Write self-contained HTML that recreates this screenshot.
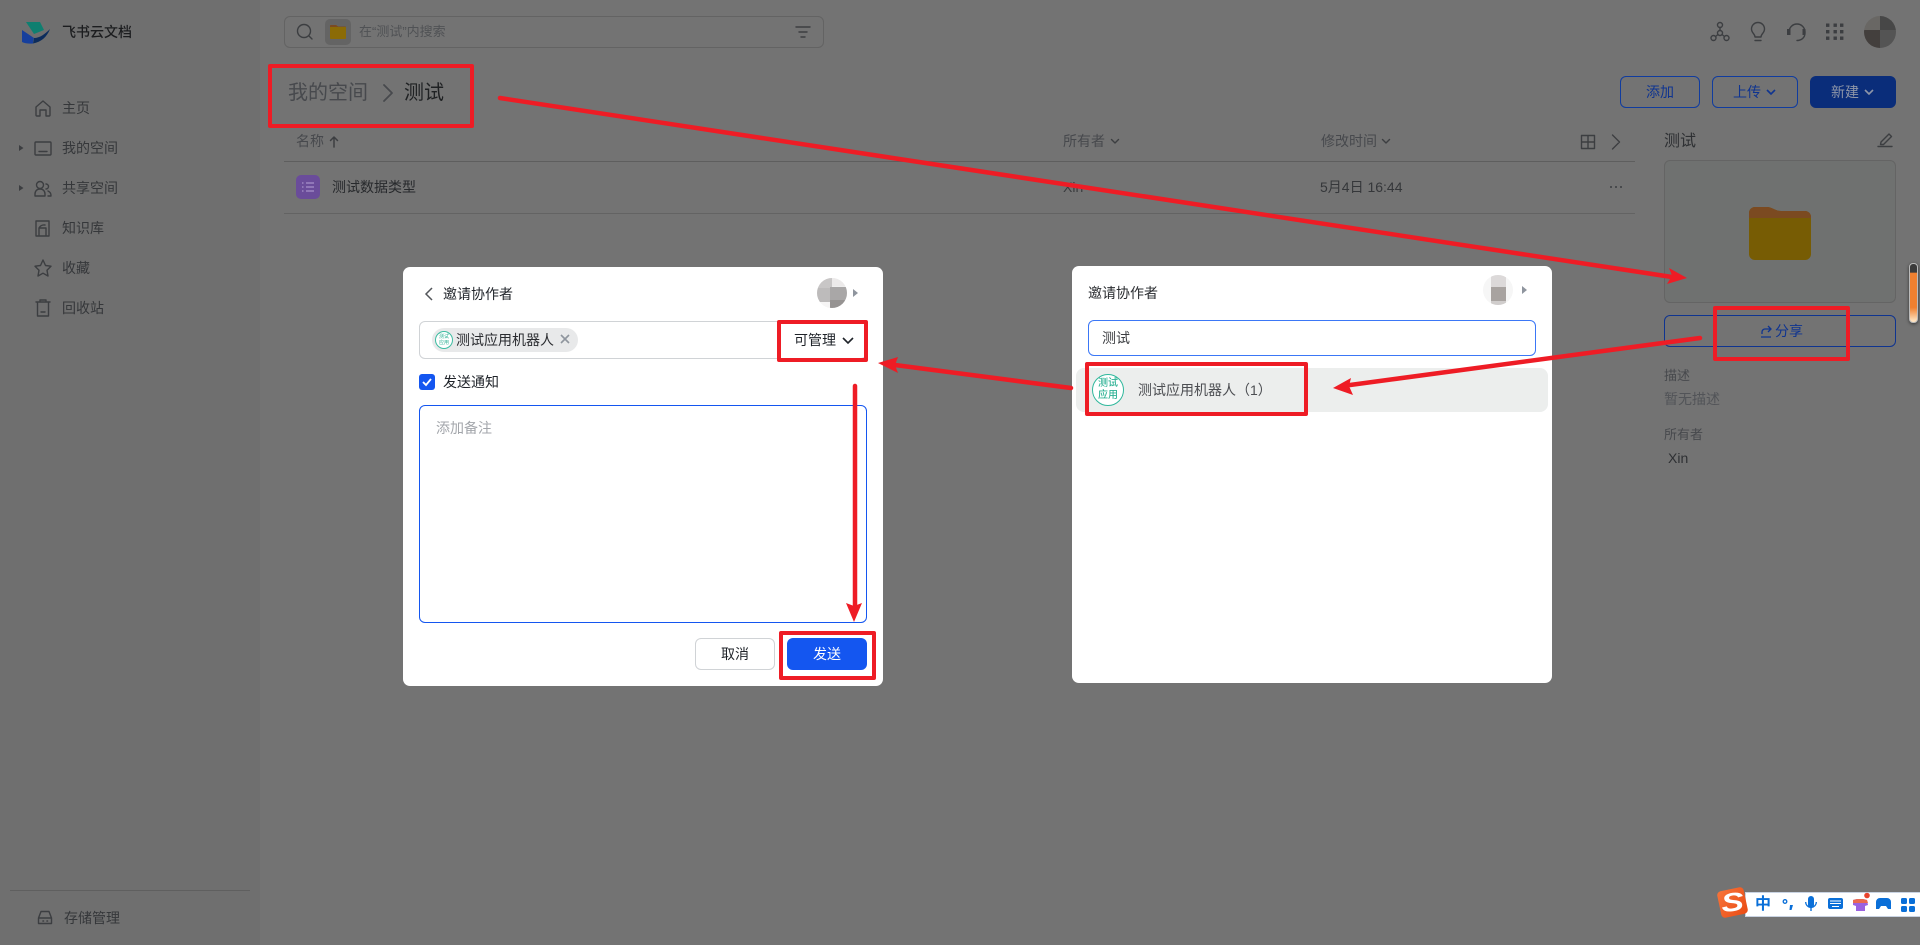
<!DOCTYPE html>
<html lang="zh-CN"><head><meta charset="utf-8"><title>飞书云文档</title>
<style>
html,body{margin:0;padding:0;width:1920px;height:945px;overflow:hidden;background:#737373}
body{position:relative;font-family:"Liberation Sans","Noto Sans CJK SC",sans-serif;font-size:14px;color:#1f2329}
div,span.a{position:absolute;box-sizing:border-box}
.t{position:absolute;white-space:nowrap;line-height:20px;height:20px}
.s{color:#35373a}
.g{color:#47494d}
.red{border:4px solid #ee1c25;border-radius:2px;z-index:5}
svg{position:absolute;left:0;top:0;overflow:visible}
</style></head><body>
<div style="left:0;top:0;width:260px;height:945px;background:#6f6f6f"></div>
<div style="left:10px;top:890px;width:240px;height:1px;background:#5f5f5f"></div>

<span class="t" style="left:62px;top:22px;color:#1c1d1f;font-weight:500;font-size:14px">飞书云文档</span>
<span class="t s" style="left:62px;top:98px">主页</span>
<span class="t s" style="left:62px;top:138px">我的空间</span>
<span class="t s" style="left:62px;top:178px">共享空间</span>
<span class="t s" style="left:62px;top:218px">知识库</span>
<span class="t s" style="left:62px;top:258px">收藏</span>
<span class="t s" style="left:62px;top:298px">回收站</span>
<span class="t s" style="left:64px;top:908px">存储管理</span>

<div style="left:284px;top:16px;width:540px;height:32px;border:1px solid #636363;border-radius:6px"></div>
<div style="left:325px;top:19px;width:26px;height:26px;background:#646464;border-radius:5px"></div>
<span class="t" style="left:359px;top:22px;font-size:13px;color:#505255">在“测试”内搜索</span>

<span class="t g" style="left:288px;top:81px;font-size:20px;line-height:24px;height:24px">我的空间</span>
<span class="t" style="left:404px;top:81px;font-size:20px;line-height:24px;height:24px;color:#1f2123">测试</span>

<span class="t g" style="left:296px;top:131px">名称</span>
<span class="t g" style="left:1063px;top:131px">所有者</span>
<span class="t g" style="left:1321px;top:131px">修改时间</span>
<div style="left:284px;top:161px;width:1351px;height:1px;background:#5e5e5e"></div>
<div style="left:284px;top:213px;width:1351px;height:1px;background:#636363"></div>
<div style="left:296px;top:175px;width:24px;height:24px;border-radius:5px;background:#6a4c9a"></div>
<span class="t" style="left:332px;top:177px;color:#27292c">测试数据类型</span>
<span class="t" style="left:1063px;top:177px;color:#3a3c3f">Xin</span>
<span class="t" style="left:1320px;top:177px;color:#35373a">5月4日 16:44</span>

<div style="left:1620px;top:76px;width:80px;height:32px;border:1px solid #103c9f;border-radius:6px;color:#0f3490;text-align:center;line-height:30px">添加</div>
<div style="left:1712px;top:76px;width:86px;height:32px;border:1px solid #103c9f;border-radius:6px;color:#0f3490;line-height:30px;padding-left:20px">上传</div>
<div style="left:1810px;top:76px;width:86px;height:32px;background:#0a2d7a;border-radius:6px;color:#8e96a8;line-height:32px;padding-left:21px">新建</div>

<span class="t" style="left:1664px;top:131px;font-size:16px;line-height:21px;color:#2e3033">测试</span>
<div style="left:1664px;top:160px;width:232px;height:143px;background:#6f7170;border:1px solid #646464;border-radius:6px"></div>
<div style="left:1664px;top:315px;width:232px;height:32px;border:1px solid #0f3490;border-radius:6px;color:#0f3490;line-height:30px;padding-left:110px;font-size:14px">分享</div>
<span class="t g" style="left:1664px;top:366px;font-size:13px">描述</span>
<span class="t" style="left:1664px;top:389px;color:#525458">暂无描述</span>
<span class="t g" style="left:1664px;top:425px;font-size:13px">所有者</span>
<span class="t" style="left:1668px;top:448px;color:#2e3033">Xin</span>

<div style="left:1909px;top:263px;width:9px;height:60px;border-radius:4px;border:1px solid #bbb;background:linear-gradient(#3a3a3a 0,#3a3a3a 14%,#f08030 16%,#f08030 75%,#ffe3c0 98%);box-shadow:0 1px 3px #333"></div>

<!-- left dialog -->
<div style="left:403px;top:267px;width:480px;height:419px;background:#fff;border-radius:7px"></div>
<span class="t" style="left:443px;top:284px;color:#1f2329;font-size:14px">邀请协作者</span>
<div style="left:817px;top:278px;width:30px;height:30px;border-radius:50%;overflow:hidden;background:#eee">
 <div style="left:0;top:0;width:15px;height:10px;background:#c8c6c6"></div>
 <div style="left:15px;top:0;width:15px;height:8px;background:#eceaea"></div>
 <div style="left:0;top:10px;width:13px;height:14px;background:#bdbbbb"></div>
 <div style="left:13px;top:9px;width:17px;height:13px;background:#a9a7a7"></div>
 <div style="left:13px;top:22px;width:17px;height:8px;background:#969392"></div>
 <div style="left:0;top:24px;width:13px;height:6px;background:#f6f5f5"></div>
</div>
<div style="left:419px;top:321px;width:448px;height:38px;border:1px solid #d0d3d6;border-radius:6px"></div>
<div style="left:432px;top:328px;width:146px;height:24px;background:#e8e9ea;border-radius:12px"></div>
<div style="left:435px;top:331px;width:18px;height:18px;border-radius:50%;background:#fff;border:1px solid #3dbda2;color:#2fb295;font-size:5px;line-height:6px;text-align:center;padding-top:2px">测试<br>应用</div>
<span class="t" style="left:456px;top:330px;color:#2a2c30">测试应用机器人</span>
<span class="t" style="left:794px;top:330px;color:#1f2329">可管理</span>
<div style="left:419px;top:374px;width:16px;height:16px;border-radius:3px;background:#1456f0"></div>
<span class="t" style="left:443px;top:372px;color:#1f2329">发送通知</span>
<div style="left:419px;top:405px;width:448px;height:218px;border:1px solid #1456f0;border-radius:6px"></div>
<span class="t" style="left:436px;top:418px;color:#a3a6ab">添加备注</span>
<div style="left:695px;top:638px;width:80px;height:32px;border:1px solid #d0d3d6;border-radius:6px;text-align:center;line-height:30px;color:#1f2329">取消</div>
<div style="left:787px;top:638px;width:80px;height:32px;background:#1456f0;border-radius:6px;text-align:center;line-height:32px;color:#fff">发送</div>

<!-- right dialog -->
<div style="left:1072px;top:266px;width:480px;height:417px;background:#fff;border-radius:7px"></div>
<span class="t" style="left:1088px;top:283px;color:#2a2c30">邀请协作者</span>
<div style="left:1483px;top:275px;width:30px;height:30px;border-radius:50%;overflow:hidden;background:#f6f6f6">
 <div style="left:8px;top:0;width:15px;height:12px;background:#dcd9d9"></div>
 <div style="left:8px;top:12px;width:15px;height:14px;background:#a8a3a0"></div>
 <div style="left:8px;top:26px;width:15px;height:4px;background:#d0cdcc"></div>
</div>
<div style="left:1088px;top:320px;width:448px;height:36px;border:1px solid #3b77f6;border-radius:6px"></div>
<span class="t" style="left:1102px;top:328px;color:#3c3e42">测试</span>
<div style="left:1076px;top:368px;width:472px;height:44px;background:#eceeed;border-radius:8px"></div>
<div style="left:1092px;top:374px;width:32px;height:32px;border-radius:50%;background:#fff;border:1px solid #2fb89c;color:#2fb295;font-size:10px;font-weight:500;line-height:12px;text-align:center;padding-top:3px">测试<br>应用</div>
<span class="t" style="left:1138px;top:380px;color:#4c4e52">测试应用机器人（1）</span>

<!-- red boxes -->
<div class="red" style="left:268px;top:64px;width:206px;height:64px"></div>
<div class="red" style="left:777px;top:320px;width:91px;height:42px"></div>
<div class="red" style="left:779px;top:631px;width:97px;height:49px"></div>
<div class="red" style="left:1085px;top:362px;width:223px;height:54px"></div>
<div class="red" style="left:1713px;top:306px;width:137px;height:55px"></div>

<!-- IME -->
<div style="left:1745px;top:892px;width:175px;height:25px;background:#fff;border:1px solid #c9d3e2;border-right:0"></div>
<div style="left:1719px;top:889px;width:27px;height:27px;background:linear-gradient(135deg,#f7743a,#ea4c14);border-radius:4px;transform:rotate(-12deg);z-index:6"></div>
<span class="t" style="left:1719px;top:889px;width:27px;height:27px;color:#fff;font-weight:bold;font-size:26px;line-height:26px;text-align:center;font-style:italic;z-index:6;transform:rotate(-6deg) scaleX(1.3)">S</span>
<span class="t" style="left:1755px;top:895px;color:#0a6fd8;font-size:16px;font-weight:bold;z-index:6">中</span>

<svg width="1920" height="945" viewBox="0 0 1920 945" fill="none" style="z-index:7">
 <!-- logo -->
 <path d="M26 22h14l4 8-10 4z" fill="#0f7f70"/>
 <path d="M22 30l12 8c-1 2-1 4-1 5.500-4 .3-8 0-11-1.500z" fill="#163f9c"/>
 <path d="M34 38c6 0 11-4 16-9-3 8-9 13-17 14.500z" fill="#0c2c5c"/>

 <g stroke="#3c3e41" stroke-width="1.400" stroke-linejoin="round" stroke-linecap="round">
  <!-- home -->
  <path d="M36 107l7-6 7 6v8a1 1 0 0 1-1 1h-3v-6h-6v6h-3a1 1 0 0 1-1-1z"/>
  <!-- folder -->
  <path d="M36 142h14a1 1 0 0 1 1 1v11a1 1 0 0 1-1 1H36a1 1 0 0 1-1-1v-11a1 1 0 0 1 1-1zM39 151.500h8"/>
  <!-- shared -->
  <circle cx="40" cy="185" r="3.500"/><path d="M35 196v-2c0-3 2-5 5-5s5 2 5 5v2zM46 184a2.500 2.500 0 1 1 0 5M48 191c2 1 3 2 3 5h-3"/>
  <!-- kb -->
  <path d="M36 221h13v15H36zM39 236v-8h7v8M39 228a6 6 0 0 1 6-3"/>
  <!-- star -->
  <path d="M43 260l2.500 5.500 5.500.7-4 4 1 5.800-5-2.800-5 2.800 1-5.800-4-4 5.500-.7z"/>
  <!-- trash -->
  <path d="M36 302h14M40 302v-2h6v2M37.500 302v14h11v-14M41 312h4"/>
  <!-- storage -->
  <path d="M41 911.500h8l2.500 6.500v5.500h-13V918zM38.500 918h13"/>
  <path d="M43 921h.5M47 921h.5" stroke-width="1.600"/>
  <!-- search -->
  <circle cx="304" cy="31" r="6.500"/><path d="M309 36l3 3"/>
  <!-- filter -->
  <path d="M796 27h14M799 32h8M801 37h4"/>
  <!-- top right -->
  <circle cx="1720" cy="25" r="2.500"/><circle cx="1720" cy="33" r="2.500"/><circle cx="1713.500" cy="38" r="2.500"/><circle cx="1726.500" cy="38" r="2.500"/><path d="M1720 27.500v3M1718 34.500l-2.500 2M1722 34.500l2.500 2"/>
  <path d="M1755 37c0-3-3.500-4-3.500-8a6.500 6.500 0 0 1 13 0c0 4-3.500 5-3.500 8zM1755 40.500h6"/>
  <path d="M1789 32a8 8 0 0 1 16 0v1c0 4.500-3.500 7.500-8 7.500"/><path d="M1787 29h3.500v6H1787zM1802.500 29h3v6h-3z" fill="#3c3e41" stroke="none"/>
  <!-- panel pencil -->
  <path d="M1878 146.500h14M1881 142l8-8 2.500 2.500-8 8h-3z"/>
  <!-- grid + chevrons -->
  <path d="M1581.500 135.500h13v13h-13zM1588 135.500v13M1581.500 142h13M1612.500 135l7 7-7 7"/>
  <path d="M384 85l8 8-8 8" stroke="#47494d" stroke-width="1.800"/>
  <path d="M334 147v-10M330.500 140.500l3.500-3.500 3.500 3.500" stroke-width="1.500"/>
  <path d="M1111.500 139.500l3.500 3.500 3.500-3.500M1382.500 139.500l3.500 3.500 3.500-3.500"/>
 </g>
 <g fill="#3c3e41">
  <rect x="1826" y="23.500" width="3.400" height="3.400"/><rect x="1833.500" y="23.500" width="3.400" height="3.400"/><rect x="1840" y="23.500" width="3.400" height="3.400"/>
  <rect x="1826" y="30" width="3.400" height="3.400"/><rect x="1833.500" y="30" width="3.400" height="3.400"/><rect x="1840" y="30" width="3.400" height="3.400"/>
  <rect x="1826" y="36.500" width="3.400" height="3.400"/><rect x="1833.500" y="36.500" width="3.400" height="3.400"/><rect x="1840" y="36.500" width="3.400" height="3.400"/>
  <circle cx="1611" cy="187" r="1"/><circle cx="1616" cy="187" r="1"/><circle cx="1621" cy="187" r="1"/>
  <path d="M19 151v-6l4.500 3-4.500 3zM19 191v-6l4.500 3-4.500 3z"/>
 </g>
 <!-- purple sheet lines -->
 <g stroke="#a691c9" stroke-width="1.300"><path d="M302 183h1.500M306 183h8M302 187h1.500M306 187h8M302 191h1.500M306 191h8"/></g>
 <!-- search folder -->
 <path d="M330 26a1 1 0 0 1 1-1h5l2 1.500h7a1 1 0 0 1 1 1V38a1 1 0 0 1-1 1H331a1 1 0 0 1-1-1z" fill="#8b6b06"/>
 <path d="M330 27v-1a1 1 0 0 1 1-1h5l2 1.500h7a1 1 0 0 1 1 .5z" fill="#7b4a21"/>
 <!-- avatar top right -->
 <clipPath id="av"><circle cx="1880" cy="32" r="16"/></clipPath>
 <g clip-path="url(#av)"><rect x="1864" y="16" width="16" height="14" fill="#696764"/><rect x="1880" y="16" width="16" height="14" fill="#474747"/><rect x="1864" y="30" width="16" height="18" fill="#433f3d"/><rect x="1880" y="30" width="16" height="18" fill="#545454"/></g>
 <!-- button chevrons -->
 <path d="M1767 90l4 4 4-4" stroke="#0f3490" stroke-width="1.600"/>
 <path d="M1865 90l4 4 4-4" stroke="#8e96a8" stroke-width="1.600"/>
 <!-- big folder -->
 <path d="M1749 213a6 6 0 0 1 6-6h12c5 0 8 4 14 4h24a6 6 0 0 1 6 6v37a6 6 0 0 1-6 6h-50a6 6 0 0 1-6-6z" fill="#775c04"/>
 <path d="M1749 218v-5a6 6 0 0 1 6-6h12c5 0 8 4 14 4h24a6 6 0 0 1 6 6v1z" fill="#7b4a21"/>
 <!-- share icon -->
 <path d="M1762 334v-2a3 3 0 0 1 3-3h6M1768 326l3 3-3 3M1761 337h10" stroke="#0f3490" stroke-width="1.300"/>
 <!-- dialog icons -->
 <path d="M432 288l-6 6 6 6" stroke="#53565b" stroke-width="1.500"/>
 <path d="M853 289v8l5-4zM1522 286v8l5-4z" fill="#8f959e"/>
 <path d="M561 335l8 8M569 335l-8 8" stroke="#8f959e" stroke-width="1.600"/>
 <path d="M843 338l5 5 5-5" stroke="#1f2329" stroke-width="1.600"/>
 <path d="M423 382l3 3 5-6" stroke="#fff" stroke-width="1.800"/>
 <!-- arrows -->
 <g stroke="#ee1c25" stroke-width="4.500" stroke-linecap="round">
  <path d="M500 98L1672 277"/>
  <path d="M1700 338L1350 385"/>
  <path d="M1071 388L895 365"/>
  <path d="M855 386V606"/>
 </g>
 <g fill="#ee1c25">
  <path d="M1687 278l-18-10 3 7.500-5 8.500z"/>
  <path d="M1333 388l18-10-2 8 4 9z"/>
  <path d="M878 363l20-6-3 8 3 8z"/>
  <path d="M854 622l-8-19 8 3 8-3z"/>
 </g>
 <!-- IME icons -->
 <g fill="#0a6fd8" stroke="none">
  <circle cx="1785" cy="901.500" r="1.800" fill="none" stroke="#0a6fd8" stroke-width="1.300"/>
  <path d="M1790 905h3l-1.500 5h-2z"/>
  <rect x="1808" y="896" width="6" height="12" rx="3"/>
  <path d="M1805 902h1.300a4.700 4.700 0 0 0 9.400 0h1.300a6 6 0 0 1-5.300 6v3h-1.400v-3a6 6 0 0 1-5.300-6z"/>
  <rect x="1828" y="898" width="15" height="11" rx="2"/>
  <path d="M1880 898h7a4 4 0 0 1 4 4v7h-3l-2-3h-5l-2 3h-3v-7a4 4 0 0 1 4-4z"/>
  <rect x="1901" y="898" width="6" height="6" rx="1.500"/><rect x="1909" y="898" width="6" height="6" rx="1.500"/><rect x="1901" y="906" width="6" height="6" rx="1.500"/><rect x="1909" y="906" width="6" height="6" rx="1.500"/>
 </g>
 <g stroke="#fff" stroke-width="1"><path d="M1830 901h11M1830 903.500h11M1832 906.500h7"/></g>
 <path d="M1853 900l4-1h6l4 1 1 5-3 1v5h-9v-5l-3-1z" fill="#9a62e0"/>
 <path d="M1853 900l4-1h6l4 1 1 3h-15z" fill="#ea6a50"/>
 <circle cx="1867" cy="895.500" r="2.800" fill="#e8432d"/>
</svg>
</body></html>
